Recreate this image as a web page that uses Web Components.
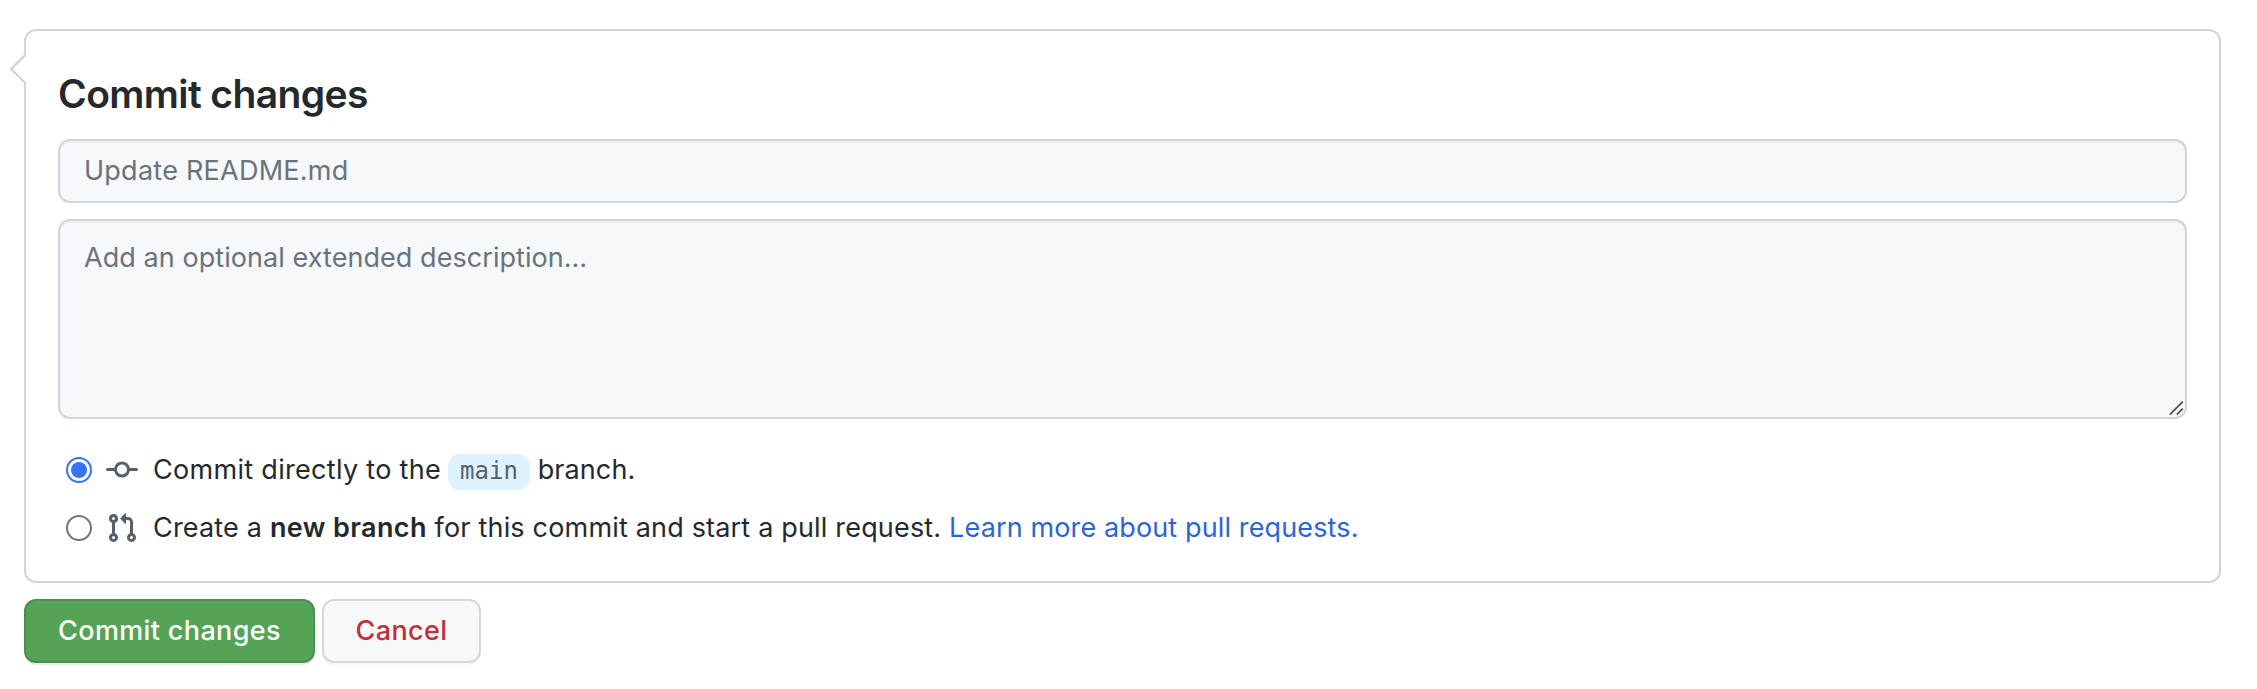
<!DOCTYPE html>
<html lang="en">
<head>
<meta charset="utf-8">
<title>Commit changes</title>
<style>
html, body { margin: 0; background: #fff; }
body { font: 400 27px/42px Inter, "Liberation Sans", sans-serif; color: #24292e; }
</style>
</head>
<body>
<commit-form>
  <commit-card heading="Commit changes">
    <text-field style="letter-spacing:.25px">Update README.md</text-field>
    <text-field multiline style="letter-spacing:.06px">Add an optional extended description…</text-field>
    <branch-option icon="commit" checked><span style="letter-spacing:.307px">Commit directly to the <branch-name>main</branch-name><span style="letter-spacing:.1px"> branch.</span></span></branch-option>
    <branch-option icon="pull-request"><span style="letter-spacing:.18px">Create a <b style="font-weight:600;letter-spacing:.38px">new branch</b> for this commit and start a pull request. <text-link>Learn more about pull requests.</text-link></span></branch-option>
  </commit-card>
  <action-button slot="actions" variant="primary">Commit changes</action-button>
  <action-button slot="actions" variant="danger">Cancel</action-button>
</commit-form>
<script>
function define(name, html, setup) {
  const template = document.createElement('template');
  template.innerHTML = html;
  customElements.define(name, class extends HTMLElement {
    constructor() {
      super();
      this.attachShadow({ mode: 'open' }).append(template.content.cloneNode(true));
    }
    connectedCallback() { if (setup) setup(this, this.shadowRoot); }
  });
}

define('commit-form', `
<style>
:host { display: block; padding: 29px 36px 26px 24px; }
.actions { display: flex; gap: 7px; margin-top: 16px; }
</style>
<slot></slot>
<div class="actions"><slot name="actions"></slot></div>`);

define('commit-card', `
<style>
:host { display: block; position: relative; box-sizing: border-box; height: 554px; padding: 41px 32px 0; border: 2px solid #d1d5da; border-radius: 12px; background: #fff; }
h3 { margin: 0 0 23px; font-size: 39px; line-height: 44px; font-weight: 600; letter-spacing: -.602px; }
.caret { position: absolute; left: -17px; top: 22px; width: 18px; height: 32px; display: block; }
</style>
<svg class="caret" viewBox="0 0 18 32"><path d="M17.5 1.5V30.5L15 29 2.2 16 15 3Z" fill="#fff"/><path d="M16.2 2 2.2 16l14 14" fill="none" stroke="#d1d5da" stroke-width="2.4"/></svg>
<h3></h3>
<slot></slot>`, (el, root) => { root.querySelector('h3').textContent = el.getAttribute('heading'); });

define('text-field', `
<style>
:host { display: block; position: relative; box-sizing: border-box; height: 64px; padding: 9px 24px; margin-bottom: 16px; border: 2px solid #d1d5da; border-radius: 12px; background: #f6f8fa; color: #6a737d; box-shadow: inset 0 2px 0 rgba(27,31,35,.04); }
:host([multiline]) { height: 200px; padding-top: 16px; margin-bottom: 30px; }
svg { display: none; position: absolute; right: 1px; bottom: 1px; width: 16px; height: 16px; }
:host([multiline]) svg { display: block; }
</style>
<slot></slot>
<svg viewBox="0 0 16 16"><path d="M1.8 14.6 14.8 1.6M8.8 14.6 14.8 8.6" stroke="#555" stroke-width="1.9" fill="none"/></svg>`);

const ICONS = {
  'commit': 'M10.5 7.75a2.5 2.5 0 11-5 0 2.5 2.5 0 015 0zm1.43.75a4.002 4.002 0 01-7.86 0H.75a.75.75 0 110-1.5h3.32a4.001 4.001 0 017.86 0h3.32a.75.75 0 110 1.5h-3.32z',
  'pull-request': 'M7.177 3.073L9.573.677A.25.25 0 0110 .854v4.792a.25.25 0 01-.427.177L7.177 3.427a.25.25 0 010-.354zM3.75 2.5a.75.75 0 100 1.5.75.75 0 000-1.5zm-2.25.75a2.25 2.25 0 113 2.122v5.256a2.251 2.251 0 11-1.5 0V5.372A2.25 2.25 0 011.5 3.25zM11 2.5h-1V4h1a1 1 0 011 1v5.628a2.251 2.251 0 101.5 0V5A2.5 2.5 0 0011 2.5zm1 10.25a.75.75 0 111.5 0 .75.75 0 01-1.5 0zM3.75 12a.75.75 0 100 1.5.75.75 0 000-1.5z'
};
define('branch-option', `
<style>
:host { display: flex; align-items: center; height: 42px; margin-bottom: 16px; padding-left: 8px; white-space: nowrap; }
.radio { width: 26px; height: 26px; flex: none; margin-right: 14px; }
.radio circle { fill: #fff; stroke: #767676; stroke-width: 2; }
.radio .dot { display: none; }
:host([checked]) .radio circle { stroke: #3375f6; }
:host([checked]) .radio .dot { display: block; fill: #3375f6; stroke: none; }
.icon { width: 32px; height: 32px; flex: none; margin-right: 15px; fill: #586069; }
</style>
<svg class="radio" viewBox="0 0 26 26"><circle cx="13" cy="13" r="12"/><circle class="dot" cx="13" cy="13" r="8"/></svg>
<svg class="icon" viewBox="0 0 16 16"><path fill-rule="evenodd"/></svg>
<div><slot></slot></div>`, (el, root) => { root.querySelector('path').setAttribute('d', ICONS[el.getAttribute('icon')]); });

define('branch-name', `
<style>
:host { display: inline-block; box-sizing: border-box; width: 82px; height: 36px; margin: 0 0 0 -1px; border-radius: 12px; background: #dff2ff; color: #586069; font: 24px/35px "DejaVu Sans Mono", monospace; letter-spacing: 0; text-align: center; vertical-align: baseline; }
</style><slot></slot>`);

define('text-link', `
<style>
:host { display: inline; color: #2c64d6; letter-spacing: .13px; }
</style><slot></slot>`);

define('action-button', `
<style>
:host { display: block; box-sizing: border-box; height: 64px; width: 291px; border: 2px solid; border-radius: 12px; text-align: center; line-height: 60px; font-weight: 500; letter-spacing: .365px; }
:host([variant=primary]) { background: #55a357; border-color: #4a8f4e; color: #fff; box-shadow: 0 2px 0 rgba(27,31,35,.1), inset 0 2px 0 rgba(255,255,255,.03); }
:host([variant=danger]) { width: 159px; background: #f6f8fa; border-color: #d5d8da; color: #bf3136; box-shadow: 0 2px 0 rgba(27,31,35,.04), inset 0 2px 0 rgba(255,255,255,.25); }
</style><slot></slot>`);
</script>
</body>
</html>
